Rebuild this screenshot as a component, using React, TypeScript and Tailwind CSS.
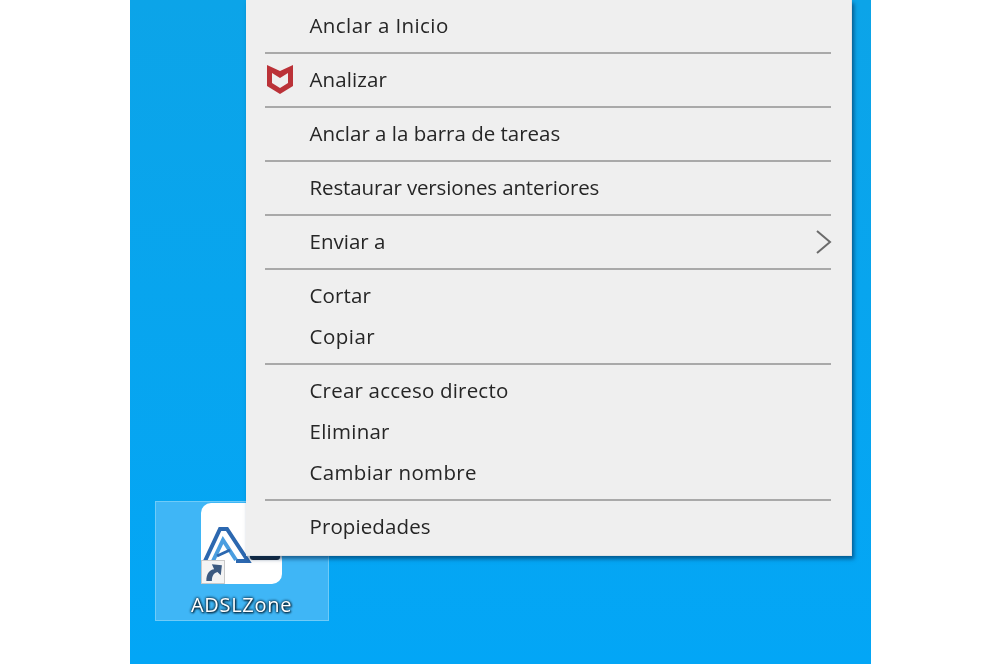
type Item = { label: string; tracking?: string; shield?: boolean; arrow?: boolean };

const groups: Item[][] = [
  [{ label: 'Anclar a Inicio', tracking: 'tracking-[0.4px]' }],
  [{ label: 'Analizar', shield: true, tracking: 'tracking-[0.1px]' }],
  [{ label: 'Anclar a la barra de tareas' }],
  [{ label: 'Restaurar versiones anteriores', tracking: 'tracking-[-0.13px]' }],
  [{ label: 'Enviar a', arrow: true }],
  [
    { label: 'Cortar', tracking: 'tracking-[0.15px]' },
    { label: 'Copiar', tracking: 'tracking-[0.5px]' },
  ],
  [
    { label: 'Crear acceso directo', tracking: 'tracking-[0.2px]' },
    { label: 'Eliminar', tracking: 'tracking-[0.25px]' },
    { label: 'Cambiar nombre', tracking: 'tracking-[0.36px]' },
  ],
  [{ label: 'Propiedades', tracking: 'tracking-[0.1px]' }],
];

function McAfeeShield() {
  return (
    <svg width="28" height="30" viewBox="0 0 28 30" className="absolute left-[20px] top-[5px]">
      <path
        d="M1 1 L14 7 L27 1 V22 L14 30 L1 22 Z M6 9 V19 L14 24 L22 19 V9 L14 14 Z"
        fill="#bb3238"
        fillRule="evenodd"
      />
    </svg>
  );
}

function ContextMenu() {
  return (
    <div className="absolute left-[116px] top-0 w-[606px] h-[556px] pt-[5px] bg-[#efefef] border-r border-b border-[#dfe3e6] shadow-[2px_3px_4px_rgba(0,40,80,0.6)] text-[#262626] text-[20.5px] blur-[0.5px]">
      {groups.map((group, i) => (
        <div key={i}>
          {i > 0 && (
            <div className="h-[13px] flex items-center pl-[19px] pr-[20px]">
              <div className="h-[2px] w-full bg-[#a9a9a9]" />
            </div>
          )}
          {group.map((item) => (
            <div key={item.label} className="relative h-[41px] flex items-center pl-[64px]">
              {item.shield && <McAfeeShield />}
              <span className={item.tracking}>{item.label}</span>
              {item.arrow && (
                <svg width="18" height="26" viewBox="0 0 18 26" className="absolute right-[18px] top-[8px]">
                  <path d="M2 2 L15 13 L2 24" fill="none" stroke="#6b6b6b" strokeWidth="2" />
                </svg>
              )}
            </div>
          ))}
        </div>
      ))}
    </div>
  );
}

function DesktopIcon() {
  return (
    <div className="absolute left-[25px] top-[501px] w-[174px] h-[120px] bg-[#3fb6f6] border border-[#6fcbf8] flex flex-col items-center">
      <div className="relative mt-[1px] w-[81px] h-[81px] rounded-[10px] bg-white blur-[0.5px]">
        <svg width="50" height="42" viewBox="0 0 50 42" className="absolute left-[1px] top-[22px]">
          <path d="M3 36 L18 4 L25 4 L46 36 H34" fill="none" stroke="#2c68b0" strokeWidth="4" />
          <path d="M11 36 L21 15 L34 35" fill="none" stroke="#4a9ee0" strokeWidth="4" />
          <path d="M15 31 L28 25" fill="none" stroke="#2c68b0" strokeWidth="3" />
        </svg>
        {/* dark strip that sticks out under the menu */}
        <div className="absolute left-[49px] top-[50px] w-[30px] h-[7px] rounded-b-[3px] bg-[#1c2a3c]" />
        <div className="absolute left-0 bottom-0 w-[24px] h-[24px] bg-[#f4f4f4] border border-[#c9c9c9] flex items-center justify-center">
          <svg width="20" height="20" viewBox="0 0 18 18">
            <path d="M3 17 C3 10 6 7 10 6.500 L8 2 L17 3 L16 12 L13 9 C10 10 8 12 8 17 Z" fill="#3c5a80" />
          </svg>
        </div>
      </div>
      <span className="mt-[10px] text-[20px] leading-[22px] font-medium tracking-[0.7px] text-white blur-[0.4px] [text-shadow:0_0_3px_#06283e,0_0_3px_#06283e,1px_1px_2px_#06283e]">
        ADSLZone
      </span>
    </div>
  );
}

export default function App() {
  return (
    <div className="w-[1000px] h-[664px] bg-white flex justify-center font-['Open_Sans','Noto_Sans',sans-serif]">
      <div className="relative w-[741px] h-full overflow-hidden bg-gradient-to-b from-[#0ca4e8] to-[#03a6f6]">
        <DesktopIcon />
        <ContextMenu />
      </div>
    </div>
  );
}
